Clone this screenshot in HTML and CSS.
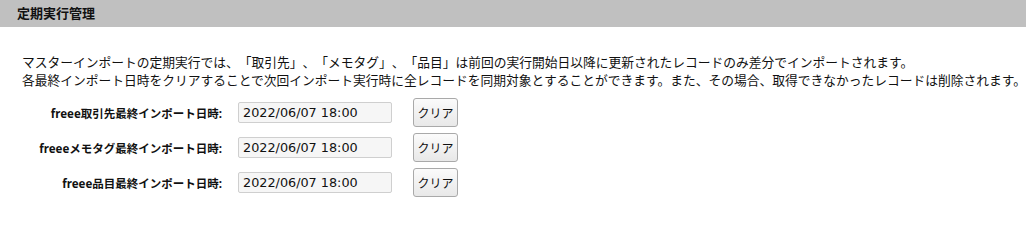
FILE: index.html
```html
<!DOCTYPE html>
<html lang="ja">
<head>
<meta charset="utf-8">
<link rel="stylesheet" href="styles.css">
</head>
<body>
<div class="section-header">定期実行管理</div>
<div class="section-body">
  <p class="desc">マスターインポートの定期実行では、「取引先」、「メモタグ」、「品目」は前回の実行開始日以降に更新されたレコードのみ差分でインポートされます。<br>各最終インポート日時をクリアすることで次回インポート実行時に全レコードを同期対象とすることができます。また、その場合、取得できなかったレコードは削除されます。</p>
  <div class="rows">
    <div class="row">
      <label class="label">freee取引先最終インポート日時:</label>
      <input class="date-input" type="text" value="2022/06/07 18:00" readonly>
      <button class="btn" type="button">クリア</button>
    </div>
    <div class="row">
      <label class="label">freeeメモタグ最終インポート日時:</label>
      <input class="date-input" type="text" value="2022/06/07 18:00" readonly>
      <button class="btn" type="button">クリア</button>
    </div>
    <div class="row">
      <label class="label">freee品目最終インポート日時:</label>
      <input class="date-input" type="text" value="2022/06/07 18:00" readonly>
      <button class="btn" type="button">クリア</button>
    </div>
  </div>
</div>
</body>
</html>
```
FILE: styles.css
```css
html, body {
  margin: 0;
  padding: 0;
  background: #ffffff;
  color: #000000;
  font-family: "Noto Sans", "Noto Sans CJK JP", sans-serif;
  text-spacing-trim: space-all;
}

.section-header {
  height: 27px;
  line-height: 27px;
  background: #c0c0c0;
  padding-left: 17px;
  font-size: 13px;
  font-weight: bold;
  color: #111;
}

.section-body {
  padding-left: 22px;
}

.desc {
  margin: 26px 0 0 0;
  font-size: 12.75px;
  line-height: 18px;
  white-space: nowrap;
  color: #111;
  text-spacing-trim: space-all;
}

.rows {
  margin-top: 9px;
  margin-left: -22px;
  display: flex;
  flex-direction: column;
  gap: 6px;
}

.row {
  display: grid;
  grid-template-columns: 222px 154px 45px;
  column-gap: 16px;
  align-items: center;
  height: 29px;
}

.row .btn {
  margin-left: 5px;
}

.label {
  text-align: right;
  font-size: 11.5px;
  font-weight: bold;
  color: #111;
  white-space: nowrap;
}

.date-input {
  box-sizing: border-box;
  width: 154px;
  height: 21px;
  margin: 0;
  padding: 0 4px;
  border: 1px solid #cfcfcf;
  border-radius: 2px;
  background: #f6f6f6;
  font-family: "DejaVu Sans", sans-serif;
  font-size: 12.8px;
  color: #111;
  outline: none;
}

.btn {
  box-sizing: border-box;
  width: 45px;
  height: 29px;
  padding: 0;
  border: 1px solid #a9a9a9;
  border-radius: 3px;
  background: linear-gradient(#fbfbfb, #e8e8e8);
  font-family: "Noto Sans CJK JP", sans-serif;
  font-size: 12px;
  color: #111;
}
```
